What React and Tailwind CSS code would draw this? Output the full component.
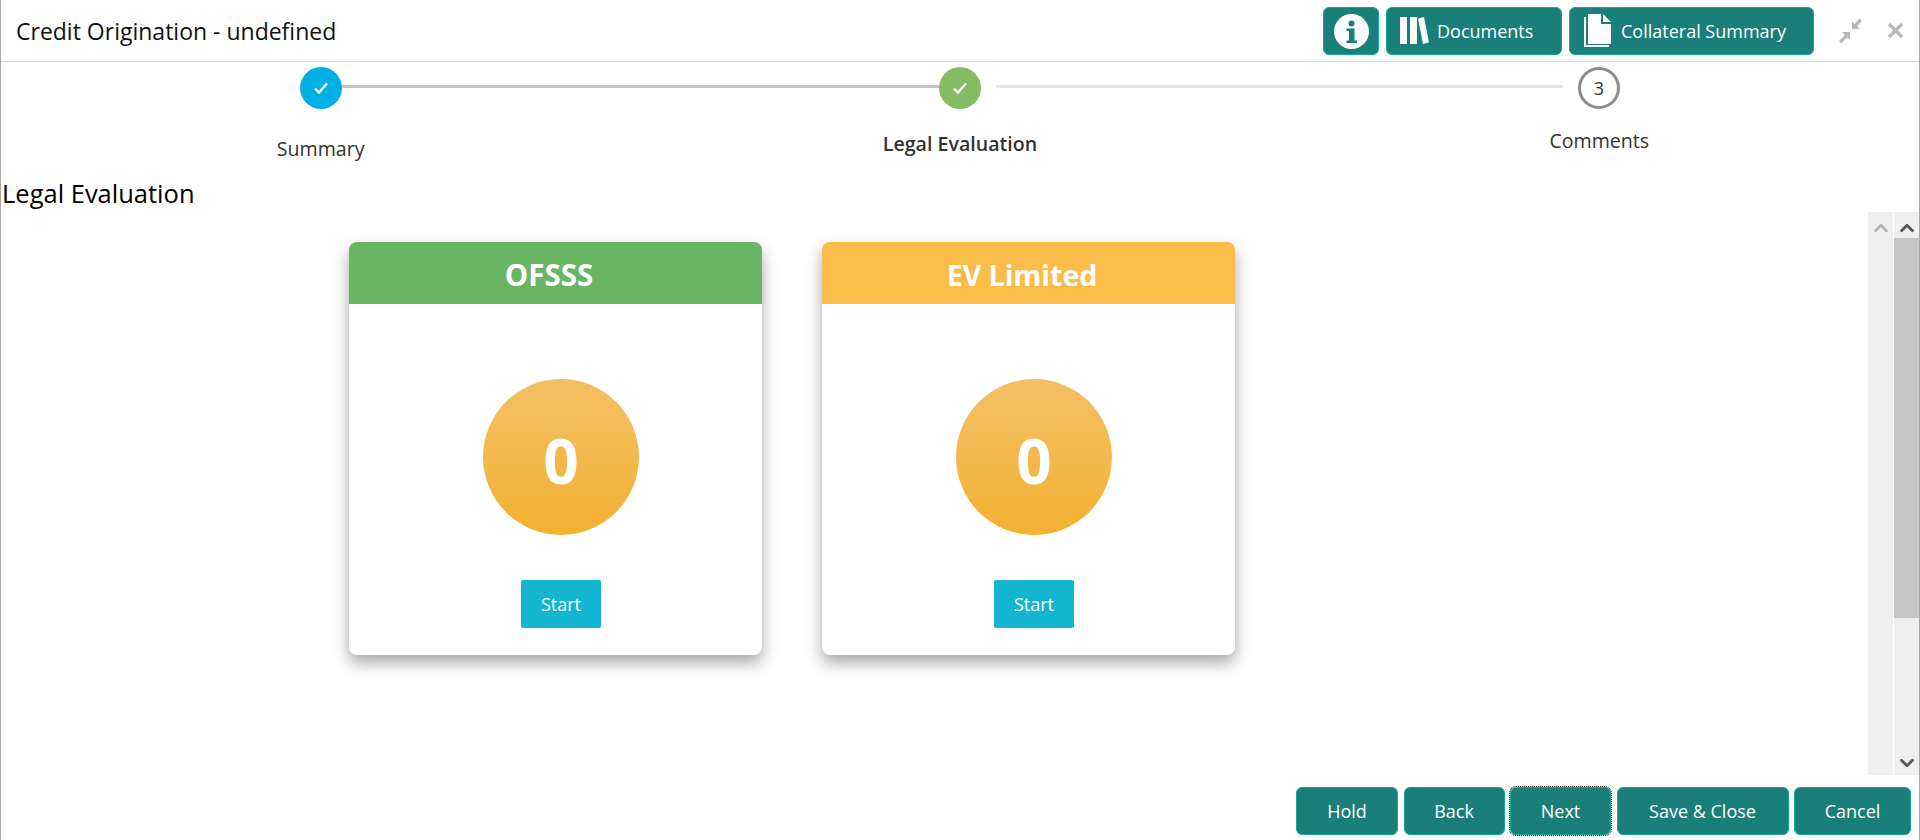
import { ChevronUp, ChevronDown } from "lucide-react";

const FONT = "font-['Open_Sans',sans-serif]";

const FOOTER_BUTTONS = [
  { label: "Hold", w: "w-[102px]" },
  { label: "Back", w: "w-[101px]" },
  { label: "Next", w: "w-[101px]", focus: true },
  { label: "Save & Close", w: "w-[172px]" },
  { label: "Cancel", w: "w-[117px]" },
];

function InfoIcon() {
  return (
    <svg width="35" height="35" viewBox="0 0 35 35">
      <circle cx="17.5" cy="17.5" r="17.5" fill="#fff" />
      <circle cx="17.5" cy="9.5" r="3" fill="#1b7f79" />
      <path d="M12.5 14.5h8v12h2.5v2.5H12.5v-2.5h2.5v-9.500h-2.500z" fill="#1b7f79" />
    </svg>
  );
}

function BooksIcon() {
  return (
    <svg width="30" height="28" viewBox="0 0 30 28">
      <rect x="0" y="0" width="7" height="27" fill="#fff" />
      <rect x="10" y="0" width="7" height="27" fill="#fff" />
      <path d="M18 1.500L24 0l5 25.500-6 1.500z" fill="#fff" />
    </svg>
  );
}

function PagesIcon() {
  return (
    <svg width="28" height="34" viewBox="0 0 28 34">
      <path d="M0 3h2v28h23v2H0z" fill="#fff" />
      <path d="M4 0h13v10h10v20H4z" fill="#fff" />
      <path d="M19 0l8 8h-8z" fill="#fff" />
    </svg>
  );
}

function CheckMark() {
  return (
    <svg width="16" height="14" viewBox="0 0 16 14">
      <path d="M2 7.500l4 4 8-9" fill="none" stroke="#fff" strokeWidth="2.400" />
    </svg>
  );
}

function TealButton({ className, children }) {
  return (
    <button className={`flex items-center h-[48px] rounded-[6px] bg-[#1b7f79] border border-[#14a79b] text-white text-[18px] ${className}`}>
      {children}
    </button>
  );
}

function EvaluationCard({ title, headerClass }) {
  return (
    <div className="w-[413px] h-[413px] rounded-[8px] bg-white shadow-[0_8px_16px_rgba(0,0,0,0.35)] overflow-hidden">
      <div className={`h-[62px] flex items-center justify-center pr-[13px] pt-[4px] text-white font-bold ${headerClass}`}>{title}</div>
      <div className="flex flex-col items-center pl-[11px] pt-[75px]">
        <div className="w-[156px] h-[156px] rounded-full bg-gradient-to-b from-[#f2c063] to-[#f4b12f] flex items-center justify-center pt-[6px] text-white text-[62px] font-bold">0</div>
        <button className="mt-[45px] w-[80px] h-[48px] rounded-[2px] bg-[#13b6d1] text-white text-[18px]">Start</button>
      </div>
    </div>
  );
}

export default function App() {
  return (
    <div className={`w-[1920px] h-[840px] flex flex-col bg-white border-x border-[#a8a8a8] overflow-hidden ${FONT}`}>
      {/* Header */}
      <div className="h-[62px] shrink-0 flex items-center border-b border-[#dcdcdc] pl-[15px]">
        <div className="flex-1 pt-[1px] text-[23px] text-[#111]">Credit Origination - undefined</div>
        <div className="flex items-center gap-[7px] mt-[1px]">
          <TealButton className="w-[56px] justify-center"><InfoIcon /></TealButton>
          <TealButton className="w-[176px] pl-[13px] gap-[7px]"><BooksIcon />Documents</TealButton>
          <TealButton className="w-[245px] pl-[14px] gap-[9px] text-[17.600px]"><PagesIcon />Collateral Summary</TealButton>
        </div>
        <svg className="ml-[23px]" width="26" height="26" viewBox="0 0 26 26">
          <path d="M15 3v8h8l-3-3 5-5-2.500-2.500-5 5.500z" fill="#b8b8b8" />
          <path d="M13 22v-8H5l3 3-6 6 2.500 2.500 5.500-6z" fill="#b8b8b8" />
        </svg>
        <svg className="ml-[24px] mr-[15px]" width="17" height="17" viewBox="0 0 17 17">
          <path d="M2 2l13 13M15 2L2 15" stroke="#b8b8b8" strokeWidth="3.500" />
        </svg>
      </div>

      {/* Stepper */}
      <div className="flex items-start pt-[5px] pl-[299px] shrink-0">
        <div className="w-[42px] h-[42px] rounded-full bg-[#00afe3] flex items-center justify-center"><CheckMark /></div>
        <div className="w-[597px] h-[3px] mt-[18px] bg-[#c4c4c4]" />
        <div className="w-[42px] h-[42px] rounded-full bg-[#84bc63] flex items-center justify-center"><CheckMark /></div>
        <div className="w-[567px] h-[3px] mt-[18px] ml-[15px] bg-[#e5e5e5]" />
        <div className="w-[42px] h-[42px] ml-[15px] rounded-full border-[3px] border-[#8c8c8c] flex items-center justify-center text-[18px] text-[#333]">3</div>
      </div>
      <div className="grid grid-cols-3 h-[66px] shrink-0 text-center text-[19.600px] leading-[28px] text-[#333]">
        <div className="pt-[26px]">Summary</div>
        <div className="pt-[21px] font-semibold">Legal Evaluation</div>
        <div className="pt-[18px]">Comments</div>
      </div>

      <div className="h-[37px] shrink-0 pl-[1px] text-[25.500px] leading-[36px] text-black">Legal Evaluation</div>

      {/* Content */}
      <div className="h-[563px] shrink-0 flex">
        <div className="flex-1 flex gap-[60px] pt-[30px] pl-[348px]">
          <EvaluationCard title="OFSSS" headerClass="bg-[#69b563] text-[29.500px]" />
          <EvaluationCard title="EV Limited" headerClass="bg-[#fbbd4a] text-[28.500px]" />
        </div>
        <div className="w-[25px] bg-[#efefef] flex justify-center pt-[5px]">
          <ChevronUp size={22} strokeWidth={3} className="text-[#b4b4b4]" />
        </div>
        <div className="w-[25px] ml-[1px] bg-[#efefef] flex flex-col items-center">
          <div className="h-[26px] shrink-0 pt-[5px]"><ChevronUp size={22} strokeWidth={3} className="text-[#555]" /></div>
          <div className="w-full h-[380px] bg-[#c6c6c6]" />
          <div className="flex-1 flex items-end pb-[1px]"><ChevronDown size={22} strokeWidth={3} className="text-[#555]" /></div>
        </div>
      </div>

      {/* Footer */}
      <div className="flex justify-end gap-[5.500px] pt-[12px] pr-[8px]">
        {FOOTER_BUTTONS.map(b => (
          <TealButton key={b.label} className={`justify-center ${b.w} ${b.focus ? "outline-1 outline-dotted outline-black" : ""}`}>{b.label}</TealButton>
        ))}
      </div>
    </div>
  );
}
